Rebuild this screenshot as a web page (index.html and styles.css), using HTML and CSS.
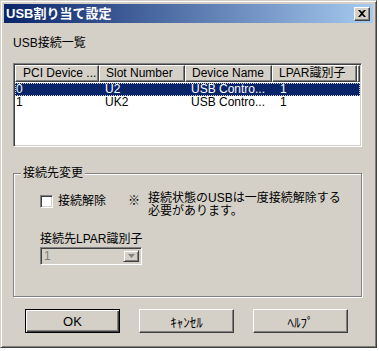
FILE: index.html
```html
<!DOCTYPE html>
<html lang="ja">
<head>
  <meta charset="UTF-8" />
  <title>USB割り当て設定</title>
  <link rel="stylesheet" href="styles.css">
</head>
<body>
  <div class="window">
    <div class="titlebar">
      <span class="title">USB割り当て設定</span>
      <span class="close">
        <svg width="8" height="7" viewBox="0 0 8 7"><path d="M0 0h2l2 2 2-2h2L5 3.5 8 7H6L4 5 2 7H0l3-3.5z" fill="#000"/></svg>
      </span>
    </div>

    <div class="content">
      <div class="caption">USB接続一覧</div>

      <div class="listview">
        <div class="lv-head">
          <div class="col c1">PCI Device ...</div>
          <div class="col c2">Slot Number</div>
          <div class="col c3">Device Name</div>
          <div class="col c4">LPAR識別子</div>
          <div class="col c5"></div>
        </div>
        <div class="lv-body">
          <div class="row selected">
            <div class="cell c1">0</div>
            <div class="cell c2">U2</div>
            <div class="cell c3">USB Contro...</div>
            <div class="cell c4">1</div>
          </div>
          <div class="row">
            <div class="cell c1">1</div>
            <div class="cell c2">UK2</div>
            <div class="cell c3">USB Contro...</div>
            <div class="cell c4">1</div>
          </div>
        </div>
      </div>

      <div class="group">
        <div class="legend">接続先変更</div>
        <div class="group-body">
          <div class="check-row">
            <span class="checkbox"></span>
            <span class="check-label">接続解除</span>
            <span class="mark">※</span>
            <span class="note">接続状態のUSBは一度接続解除する<br>必要があります。</span>
          </div>
          <div class="field-label">接続先LPAR識別子</div>
          <div class="combo">
            <span class="combo-value">1</span>
            <span class="combo-btn">
              <svg width="7" height="4" viewBox="0 0 7 4"><path d="M0 0h7L3.5 4z" fill="#808080"/></svg>
            </span>
          </div>
        </div>
      </div>

      <div class="buttons">
        <button type="button" class="btn default">OK</button>
        <button type="button" class="btn">ｷｬﾝｾﾙ</button>
        <button type="button" class="btn">ﾍﾙﾌﾟ</button>
      </div>
    </div>
  </div>
</body>
</html>
```

FILE: styles.css
```css
body {
  margin: 0;
  background: #fff;
  font-family: "Liberation Sans", "Noto Sans CJK JP", sans-serif;
  font-size: 12px;
  color: #000;
}
.window {
  width: 377px;
  height: 348px;
  box-sizing: border-box;
  background: #d4d0c8;
  border: 1px solid;
  border-color: #d4d0c8 #404040 #404040 #d4d0c8;
  box-shadow: inset 1px 1px #fff, inset -1px -1px #808080;
  padding: 3px;
}
.titlebar {
  height: 19px;
  display: flex;
  align-items: center;
  justify-content: space-between;
  padding: 0 3px 0 2px;
  background: linear-gradient(to right, #0a246a, #a6caf0);
}
.title {
  color: #fff;
  font-weight: bold;
  font-size: 13px;
  line-height: 16px;
}
.close {
  width: 16px;
  height: 14px;
  box-sizing: border-box;
  background: #d4d0c8;
  border: 1px solid;
  border-color: #fff #404040 #404040 #fff;
  box-shadow: inset -1px -1px #808080;
  display: flex;
  align-items: center;
  justify-content: center;
}
.content {
  padding: 13px 11px 0 9px;
}
.caption {
  line-height: 14px;
  height: 14px;
}

/* list view */
.listview {
  margin-top: 13px;
  height: 84px;
  box-sizing: border-box;
  background: #fff;
  border: 1px solid;
  border-color: #808080 #fff #fff #808080;
  box-shadow: inset 1px 1px #404040, inset -1px -1px #d4d0c8;
  padding: 1px;
}
.lv-head {
  display: flex;
  height: 17px;
}
.lv-head .col {
  box-sizing: border-box;
  height: 17px;
  line-height: 15px;
  background: #d4d0c8;
  border: 1px solid;
  border-color: #fff #404040 #404040 #fff;
  box-shadow: inset -1px -1px #808080;
  padding-left: 6px;
  white-space: nowrap;
  overflow: hidden;
}
.lv-head .c1 { padding-left: 7px; }
.c1 { width: 84px; }
.c2 { width: 86px; }
.c3 { width: 87px; }
.c4 { width: 85px; }
.lv-head .c5 { flex: 1; padding: 0; }
.lv-body {
  padding-top: 1px;
}
.row {
  display: flex;
  height: 13px;
  line-height: 13px;
}
.row .cell {
  box-sizing: border-box;
  padding-left: 6px;
  white-space: nowrap;
}
.row .cell.c1 { padding-left: 1px; }
.row .cell.c4 { padding-left: 8px; }
.row.selected {
  background: #0a246a;
  color: #fff;
  outline: 1px dotted #d4d0c8;
  outline-offset: -1px;
}

/* group box */
.group {
  margin-top: 26px;
  height: 124px;
  box-sizing: border-box;
  border: 1px solid #808080;
  box-shadow: 1px 1px #fff, inset 1px 1px #fff;
}
.legend {
  width: fit-content;
  margin: -8px 0 0 7px;
  padding: 0 2px;
  height: 14px;
  line-height: 14px;
  background: #d4d0c8;
}
.group-body {
  padding: 12px 0 0 26px;
}
.check-row {
  display: flex;
  align-items: flex-start;
  line-height: 13px;
}
.checkbox {
  width: 13px;
  height: 13px;
  box-sizing: border-box;
  margin-top: 3px;
  background: #fff;
  border: 1px solid;
  border-color: #808080 #fff #fff #808080;
  box-shadow: inset 1px 1px #404040, inset -1px -1px #d4d0c8;
}
.check-label {
  margin: 3px 0 0 5px;
}
.mark {
  margin: 3px 0 0 22px;
}
.note {
  margin-left: 8px;
}
.field-label {
  margin-top: 14px;
  line-height: 14px;
}
.combo {
  margin-top: 1px;
  width: 102px;
  height: 18px;
  box-sizing: border-box;
  display: flex;
  justify-content: space-between;
  background: #d4d0c8;
  border: 1px solid;
  border-color: #808080 #fff #fff #808080;
  box-shadow: inset 1px 1px #404040, inset -1px -1px #d4d0c8;
  padding: 2px;
}
.combo-value {
  color: #808080;
  line-height: 12px;
  padding-left: 1px;
}
.combo-btn {
  width: 16px;
  height: 12px;
  box-sizing: border-box;
  background: #d4d0c8;
  border: 1px solid;
  border-color: #d4d0c8 #404040 #404040 #d4d0c8;
  box-shadow: inset 1px 1px #fff, inset -1px -1px #808080;
  display: flex;
  align-items: center;
  justify-content: center;
}

/* buttons */
.buttons {
  display: flex;
  gap: 19px;
  margin-top: 12px;
  padding-left: 12px;
}
.btn {
  width: 95px;
  height: 24px;
  box-sizing: border-box;
  font: inherit;
  font-size: 13px;
  color: #000;
  background: #d4d0c8;
  border: 1px solid;
  border-color: #fff #404040 #404040 #fff;
  box-shadow: inset -1px -1px #808080;
  padding: 0;
}
.btn.default {
  border: 1px solid #000;
  box-shadow: inset 1px 1px #fff, inset -1px -1px #404040, inset -2px -2px #808080;
}
```
